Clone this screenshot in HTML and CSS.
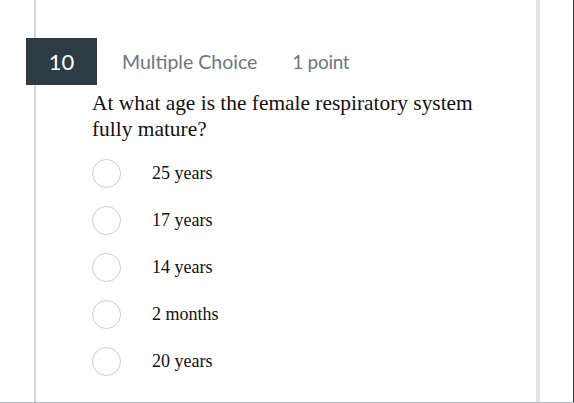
FILE: index.html
```html
<!DOCTYPE html>
<html>
<head>
<meta charset="utf-8">
<link rel="stylesheet" href="styles.css">
</head>
<body>
<div class="page">
  <div class="card">
    <div class="header">
      <div class="badge">10</div>
      <span class="qtype">Multiple Choice</span>
      <span class="points">1 point</span>
    </div>
    <div class="question">At what age is the female respiratory system fully mature?</div>
    <div class="options">
      <div class="option"><span class="radio"></span><span class="label">25 years</span></div>
      <div class="option"><span class="radio"></span><span class="label">17 years</span></div>
      <div class="option"><span class="radio"></span><span class="label">14 years</span></div>
      <div class="option"><span class="radio"></span><span class="label">2 months</span></div>
      <div class="option"><span class="radio"></span><span class="label">20 years</span></div>
    </div>
  </div>
  <div class="edge"></div>
</div>
</body>
</html>
```
FILE: styles.css
```css
html, body {
  margin: 0;
  padding: 0;
  background: #ffffff;
}
.page {
  width: 574px;
  height: 403px;
  box-sizing: border-box;
  display: flex;
  border-bottom: 1px solid #b3b6b9;
  overflow: hidden;
}
.card {
  margin-left: 34px;
  width: 506px;
  box-sizing: border-box;
  border-left: 2px solid #d3d7da;
  border-right: 4px solid #dfe2e5;
  padding-top: 38px;
}
.edge {
  margin-left: auto;
  width: 1px;
  background: #3a3a3a;
}
.header {
  display: flex;
  align-items: center;
  font-family: Lato, "Open Sans", sans-serif;
}
.badge {
  margin-left: -10px;
  width: 71px;
  height: 47px;
  background: #2d3b45;
  color: #ffffff;
  font-size: 22px;
  display: flex;
  align-items: center;
  justify-content: center;
}
.qtype {
  margin-left: 25px;
  font-size: 19.5px;
  color: #6b7780;
}
.points {
  margin-left: 35px;
  font-size: 19px;
  letter-spacing: -0.3px;
  color: #6b7780;
}
.question {
  margin-top: 5px;
  padding-left: 56px;
  padding-right: 40px;
  font-family: "Liberation Serif", "Times New Roman", serif;
  font-size: 21.4px;
  line-height: 26px;
  color: #111111;
}
.options {
  margin-top: 8px;
  padding-left: 56px;
  display: flex;
  flex-direction: column;
}
.option {
  height: 47px;
  display: flex;
  align-items: center;
}
.radio {
  width: 27px;
  height: 27px;
  border: 1.5px solid #c8ced3;
  border-radius: 50%;
  flex: none;
}
.label {
  margin-left: 31px;
  font-family: "Liberation Serif", "Times New Roman", serif;
  font-size: 18px;
  color: #111111;
}
```
